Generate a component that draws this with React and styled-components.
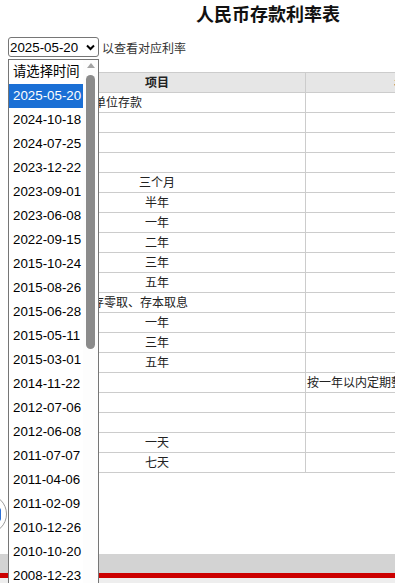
import React from 'react';
import styled, { createGlobalStyle } from 'styled-components';

const GlobalStyle = createGlobalStyle`
  html, body {
    margin: 0;
    padding: 0;
    overflow: hidden;
    background: #fff;
  }
  body {
    font-family: "Liberation Sans", "Noto Sans CJK SC", sans-serif;
    color: #222;
  }
`;

const Page = styled.div`
  position: relative;
  min-height: 583px;
`;

const Content = styled.div`
  width: 520px;
  padding: 0 8px;
`;

const Title = styled.h1`
  margin: 0;
  height: 30px;
  line-height: 30px;
  text-align: center;
  font-size: 18px;
  font-weight: bold;
  color: #111;
`;

const Picker = styled.div`
  display: flex;
  align-items: center;
  height: 20px;
  margin-top: 7px;
`;

const SelectBox = styled.div`
  position: relative;
  box-sizing: border-box;
  width: 91px;
  height: 20px;
  border: 1px solid #767676;
  border-radius: 3px;
  display: flex;
  align-items: center;
  justify-content: space-between;
  padding: 0 3px 0 1px;
  font-size: 13.33px;
  color: #000;
`;

const Hint = styled.span`
  margin-left: 3px;
  font-size: 12px;
  color: #333;
`;

const Dropdown = styled.div`
  position: absolute;
  top: 21px;
  left: -1px;
  z-index: 5;
  box-sizing: border-box;
  width: 91px;
  height: 524px;
  display: flex;
  border: 1px solid #767676;
  border-bottom: none;
  background: #fff;
  overflow: hidden;
`;

const Options = styled.ul`
  width: 74px;
  margin: 0;
  padding: 0;
  list-style: none;
`;

const Option = styled.li`
  height: 24px;
  line-height: 24px;
  padding-left: 4px;
  font-size: 13.33px;
  white-space: nowrap;
  color: ${(p) => (p.$active ? '#fff' : '#000')};
  background: ${(p) => (p.$active ? '#1a6fd5' : 'transparent')};
`;

const Scrollbar = styled.div`
  flex: 1;
  display: flex;
  flex-direction: column;
  align-items: center;
  background: #fdfdfd;
`;

const ArrowUp = styled.div`
  width: 0;
  height: 0;
  margin-top: 3px;
  border-left: 4px solid transparent;
  border-right: 4px solid transparent;
  border-bottom: 5px solid #a3a3a3;
`;

const Thumb = styled.div`
  width: 9px;
  height: 274px;
  margin-top: 7px;
  border-radius: 5px;
  background: #8b8b8b;
`;

const Table = styled.table`
  width: 530px;
  margin-top: 15px;
  border-collapse: collapse;
  table-layout: fixed;
  font-size: 12px;
  color: #222;
`;

const HeadCell = styled.th`
  height: 19px;
  padding: 0;
  line-height: 18px;
  border: 1px solid #ccc;
  background: #e6e6e6;
  font-weight: bold;
  text-align: center;
`;

const Cell = styled.td`
  height: 19px;
  padding: 0 1px;
  line-height: 18px;
  border: 1px solid #ccc;
  white-space: nowrap;
  overflow: hidden;
  text-align: ${(p) => (p.$center ? 'center' : 'left')};
`;

const Footer = styled.footer`
  margin-top: 81px;
  height: 19px;
  background: #d3d3d3;
  border-bottom: 5px solid #cc0000;
`;

const FooterRest = styled.div`
  height: 10px;
  background: #eeeeee;
`;

const FloatButton = styled.div`
  position: fixed;
  left: -33px;
  top: 494px;
  box-sizing: border-box;
  width: 40px;
  height: 40px;
  border: 1px solid #9a9a9a;
  border-radius: 50%;
  background: #fff;
  display: flex;
  align-items: center;
  justify-content: flex-end;
  padding-right: 5px;
`;

const FloatMark = styled.div`
  width: 6px;
  height: 13px;
  border-radius: 2px;
  background: #2b6fd6;
`;

const dates = [
  '2025-05-20', '2024-10-18', '2024-07-25', '2023-12-22', '2023-09-01',
  '2023-06-08', '2022-09-15', '2015-10-24', '2015-08-26', '2015-06-28',
  '2015-05-11', '2015-03-01', '2014-11-22', '2012-07-06', '2012-06-08',
  '2011-07-07', '2011-04-06', '2011-02-09', '2010-12-26', '2010-10-20',
  '2008-12-23', '2008-11-27',
];

const rows = [
  { name: '一、城乡居民及单位存款' },
  { name: '（一）活期' },
  { name: '（二）定期' },
  { name: '1.整存整取' },
  { name: '三个月', center: true },
  { name: '半年', center: true },
  { name: '一年', center: true },
  { name: '二年', center: true },
  { name: '三年', center: true },
  { name: '五年', center: true },
  { name: '2.零存整取、整存零取、存本取息' },
  { name: '一年', center: true },
  { name: '三年', center: true },
  { name: '五年', center: true },
  { name: '3.定活两便', rate: '按一年以内定期整存整取同档次利率打六折' },
  { name: '二、协定存款' },
  { name: '三、通知存款' },
  { name: '一天', center: true },
  { name: '七天', center: true },
];

export default function App() {
  return (
    <Page>
      <GlobalStyle />
      <Content>
        <Title>人民币存款利率表</Title>
        <Picker>
          <SelectBox>
            <span>2025-05-20</span>
            <svg width="9" height="7" viewBox="0 0 9 7">
              <path d="M1 1.5 L4.5 5 L8 1.5" fill="none" stroke="#000" strokeWidth="2" />
            </svg>
            <Dropdown>
              <Options>
                <Option>请选择时间</Option>
                {dates.map((d, i) => (
                  <Option key={d} $active={i === 0}>{d}</Option>
                ))}
              </Options>
              <Scrollbar>
                <ArrowUp />
                <Thumb />
              </Scrollbar>
            </Dropdown>
          </SelectBox>
          <Hint>以查看对应利率</Hint>
        </Picker>
        <Table>
          <colgroup>
            <col style={{ width: '297px' }} />
            <col />
          </colgroup>
          <thead>
            <tr>
              <HeadCell>项目</HeadCell>
              <HeadCell>年利率(%)</HeadCell>
            </tr>
          </thead>
          <tbody>
            {rows.map((r, i) => (
              <tr key={i}>
                <Cell $center={r.center}>{r.name}</Cell>
                <Cell>{r.rate || ''}</Cell>
              </tr>
            ))}
          </tbody>
        </Table>
      </Content>
      <Footer />
      <FooterRest />
      <FloatButton>
        <FloatMark />
      </FloatButton>
    </Page>
  );
}
